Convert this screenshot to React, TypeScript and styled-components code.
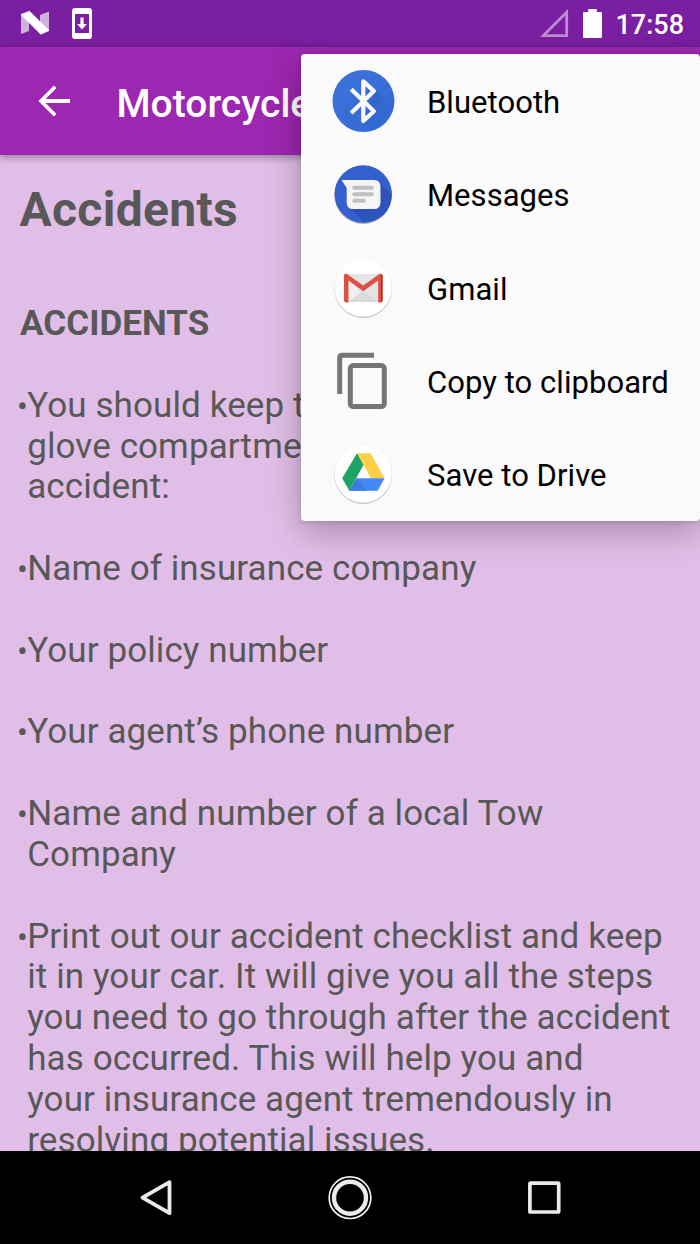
import React from "react";
import styled, { createGlobalStyle } from "styled-components";

const GlobalStyle = createGlobalStyle`
  html, body { margin: 0; padding: 0; }
  body { font-family: Roboto, "Liberation Sans", sans-serif; }
  * { box-sizing: border-box; }
`;

const Screen = styled.div`
  position: relative;
  display: flex;
  flex-direction: column;
  width: 700px;
  height: 1244px;
  overflow: hidden;
  background: #e1bee7;
`;

const StatusBar = styled.header`
  display: flex;
  flex: none;
  align-items: center;
  justify-content: space-between;
  height: 46.67px;
  padding: 0 16px 0 20px;
  background: #7b1fa2;
  color: #fff;
`;

const StatusGroup = styled.div<{ $gap: number }>`
  display: flex;
  align-items: center;
  gap: ${(p) => p.$gap}px;
  svg { display: block; }
`;

const Clock = styled.span`
  padding-top: 3px;
  font-size: 27px;
  line-height: 32px;
  font-weight: 500;
`;

const AppBar = styled.div`
  z-index: 1;
  display: flex;
  flex: none;
  align-items: center;
  gap: 46.5px;
  height: 108.5px;
  padding: 0 0 0 38px;
  background: #9c27b0;
  box-shadow: 0 2px 8px rgba(0, 0, 0, 0.38);
  svg { display: block; }
`;

const AppTitle = styled.h1`
  margin: 0;
  padding-top: 6px;
  color: #fff;
  font-size: 39px;
  line-height: 46px;
  font-weight: 500;
`;

const Article = styled.main`
  flex: 1;
  min-height: 0;
  overflow: hidden;
  padding: 27px 20px 0;
  color: #585858;
`;

const Heading = styled.h2`
  margin: 0 0 65px -0.5px;
  font-size: 48px;
  line-height: 56px;
  font-weight: 700;
  letter-spacing: 0.3px;
`;

const Subheading = styled.h3`
  margin: 0 0 41.6px;
  font-size: 35px;
  line-height: 41px;
  font-weight: 700;
  letter-spacing: 0.05px;
`;

const Notes = styled.ul`
  display: flex;
  flex-direction: column;
  gap: 40.83px;
  margin: 0;
  padding: 0;
  list-style: none;
`;

const Note = styled.li`
  display: flex;
  margin-left: -3px;
  font-size: 35px;
  line-height: 40.83px;
  letter-spacing: 0.1px;
  white-space: nowrap;
`;

const Bullet = styled.span`
  flex: none;
  width: 10.2px;
  font-size: 32px;
`;

const Menu = styled.div`
  position: absolute;
  z-index: 2;
  top: 54px;
  left: 301px;
  display: flex;
  flex-direction: column;
  width: 399px;
  height: 467px;
  border-radius: 4px;
  background: #fafafa;
  box-shadow: 0 10px 34px rgba(0, 0, 0, 0.28), 0 1px 4px rgba(0, 0, 0, 0.14);
`;

const MenuItem = styled.div`
  display: flex;
  flex: 1;
  align-items: center;
  gap: 32px;
  padding: 1px 0 0 31px;
  color: #000;
  font-size: 31px;
  line-height: 36px;
  letter-spacing: 0.05px;
  svg { display: block; flex: none; }
`;

const Label = styled.span`
  padding-top: 3px;
`;

const NavBar = styled.nav`
  display: flex;
  flex: none;
  align-items: center;
  justify-content: space-between;
  height: 93px;
  padding: 0 134px 0 133.5px;
  background: #000;
  svg { display: block; }
`;

const NougatIcon = () => (
  <svg width="30" height="26" viewBox="0 0 30 26">
    <path d="M1 4 9 8V21L1 24ZM20 5 29 1.5V21L20 17Z" fill="#fff" opacity=".65" />
    <path d="M1 4.5 9.5 1.3 29 20.5 20.8 24.2Z" fill="#fff" stroke="#fff" strokeWidth=".8" strokeLinejoin="round" />
  </svg>
);

const UpdateIcon = () => (
  <svg width="20" height="31" viewBox="0 0 20 31">
    <path fillRule="evenodd" d="M3 0H17Q20 0 20 3V28Q20 31 17 31H3Q0 31 0 28V3Q0 0 3 0ZM3 6V25H17V6Z" fill="#fff" />
    <path d="M8.4 9.5H11.6V16H15L10 21.5 5 16H8.4Z" fill="#fff" />
  </svg>
);

const SignalIcon = () => (
  <svg width="30" height="29" viewBox="0 0 30 29">
    <path d="M3.2 26.7H26.7V3.2Z" fill="none" stroke="#fff" strokeWidth="2.7" opacity=".5" />
  </svg>
);

const BatteryIcon = () => (
  <svg width="19" height="29" viewBox="0 0 19 29">
    <path d="M5.2 0H13.8V3H18Q19 3 19 4V28Q19 29 18 29H1Q0 29 0 28V4Q0 3 1 3H5.2Z" fill="#fff" />
  </svg>
);

const BackArrow = () => (
  <svg width="32" height="32" viewBox="0 0 32 32">
    <path d="M32 14.1V17.9H7.5L18.5 28.9 15.9 31.6 .4 16 15.9 .4 18.5 3.1 7.5 14.1Z" fill="#fff" />
  </svg>
);

const BluetoothIcon = () => (
  <svg width="63" height="63" viewBox="0 0 63 63">
    <defs>
      <linearGradient id="bt" x1="0" y1="0" x2="1" y2="1">
        <stop offset="0" stopColor="#3e74dc" />
        <stop offset="1" stopColor="#3267d3" />
      </linearGradient>
      <linearGradient id="btShade" x1="0" y1="0" x2="1" y2="1">
        <stop offset="0" stopColor="#2857ba" />
        <stop offset="1" stopColor="#3267d3" stopOpacity="0" />
      </linearGradient>
    </defs>
    <circle cx="31.5" cy="31" r="31" fill="url(#bt)" />
    <path d="M43.5 21 58.5 36Q54.5 52 38.5 60L29.5 52Z" fill="url(#btShade)" opacity=".75" />
    <path d="M19.2 19.3 41.9 41.2 31.3 51V11.3L41.9 21.1 19.2 43" fill="none" stroke="#fafafa" strokeWidth="4.2" strokeLinejoin="round" />
  </svg>
);

const MessagesIcon = () => (
  <svg width="63" height="63" viewBox="0 0 63 63">
    <defs>
      <linearGradient id="msgShade" x1=".3" y1=".2" x2=".8" y2="1">
        <stop offset="0" stopColor="#2b4fb2" />
        <stop offset="1" stopColor="#2f57c3" />
      </linearGradient>
    </defs>
    <circle cx="31.2" cy="32.2" r="28.7" fill="#aaa" />
    <circle cx="31.2" cy="31" r="28.7" fill="#345fcf" />
    <path d="M46 19 59.5 31Q59.5 50 43 57.3L33 59.5 17 44Z" fill="url(#msgShade)" />
    <path d="M9.5 17H42Q48.5 17 48.5 24V39.2Q48.5 46 42 46H21Q14.7 46 14.7 39.2V25Z" fill="#f5f5f5" />
    <path d="M22.3 24.7H39.8M22.3 31.2H39.8M22.3 37.7H31.8" stroke="#bfbfbf" strokeWidth="4" strokeLinecap="round" />
  </svg>
);

const GmailIcon = () => (
  <svg width="63" height="63" viewBox="0 0 63 63">
    <circle cx="31.2" cy="31.7" r="29.2" fill="#e9e9e9" />
    <circle cx="31.2" cy="32.2" r="28.7" fill="#cacaca" />
    <circle cx="31.2" cy="31" r="28.6" fill="#fff" />
    <path d="M14 17H49V45H14Z" fill="#e5e5e5" />
    <path d="M16 45 31.2 34 48 45Z" fill="#dadada" />
    <path d="M16 18V45L28 36Z" fill="#eee" />
    <path d="M12 18.5Q12 16.5 14.2 16.5L31.2 28.5 48.2 16.5Q50.5 16.5 50.5 18.5V43.5Q50.5 45.5 48.5 45.5H46.2V23.5L31.2 34.2 16.5 23.5V45.5H14Q12 45.5 12 43.5Z" fill="#de5145" />
    <path d="M49.2 17 50.5 18.5V43.5Q50.5 45.5 48.5 45.5H49.2Z" fill="#b31b14" />
  </svg>
);

const CopyIcon = () => (
  <svg width="63" height="63" viewBox="0 0 63 63">
    <path d="M42 5.2H10.5Q7.7 5.2 7.7 8V44" fill="none" stroke="#757575" strokeWidth="5" />
    <rect x="18.3" y="15.6" width="34" height="41" rx="3" fill="none" stroke="#757575" strokeWidth="5" />
  </svg>
);

const DriveIcon = () => (
  <svg width="63" height="63" viewBox="0 0 63 63">
    <circle cx="31.2" cy="31.7" r="29.2" fill="#e9e9e9" />
    <circle cx="31.2" cy="32.2" r="28.7" fill="#cacaca" />
    <circle cx="31.2" cy="31" r="28.6" fill="#fff" />
    <path d="M25 10.2H38.6L52.6 35.2H39Z" fill="#ffcf48" />
    <path d="M25 10.2 31.5 21.9 17.3 47.8 10.2 35.2Z" fill="#1da462" />
    <path d="M24.5 35.2H52.6L45.7 47.8H17.3Z" fill="#4688f4" />
    <path d="M24.5 35.2 35 47.8H17.3Z" fill="#3c7ce2" />
  </svg>
);

const NavBack = () => (
  <svg width="44" height="44" viewBox="0 0 44 44">
    <path d="M8.5 21.7 35.5 6.2V37.2Z" fill="none" stroke="#ebebeb" strokeWidth="3.8" strokeLinejoin="round" />
  </svg>
);

const NavHome = () => (
  <svg width="44" height="44" viewBox="0 0 44 44">
    <circle cx="22" cy="21.7" r="20.8" fill="none" stroke="#f4f4f4" strokeWidth="1.7" />
    <circle cx="22" cy="21.7" r="16" fill="none" stroke="#ebebeb" strokeWidth="4.4" />
  </svg>
);

const NavRecent = () => (
  <svg width="44" height="44" viewBox="0 0 44 44">
    <rect x="7.9" y="7.2" width="28.8" height="28.8" rx=".8" fill="none" stroke="#ebebeb" strokeWidth="3.7" />
  </svg>
);

const shareTargets = [
  { label: "Bluetooth", Icon: BluetoothIcon },
  { label: "Messages", Icon: MessagesIcon },
  { label: "Gmail", Icon: GmailIcon },
  { label: "Copy to clipboard", Icon: CopyIcon },
  { label: "Save to Drive", Icon: DriveIcon },
];

const notes = [
  ["You should keep this", "glove compartment", "accident:"],
  ["Name of insurance company"],
  ["Your policy number"],
  ["Your agent’s phone number"],
  ["Name and number of a local Tow", "Company"],
  [
    "Print out our accident checklist and keep",
    "it in your car. It will give you all the steps",
    "you need to go through after the accident",
    "has occurred. This will help you and",
    "your insurance agent tremendously in",
    "resolving potential issues.",
  ],
];

export default function App() {
  return (
    <Screen>
      <GlobalStyle />
      <StatusBar>
        <StatusGroup $gap={22}>
          <NougatIcon />
          <UpdateIcon />
        </StatusGroup>
        <StatusGroup $gap={13}>
          <SignalIcon />
          <BatteryIcon />
          <Clock>17:58</Clock>
        </StatusGroup>
      </StatusBar>
      <AppBar>
        <BackArrow />
        <AppTitle>Motorcycle</AppTitle>
      </AppBar>
      <Article>
        <Heading>Accidents</Heading>
        <Subheading>ACCIDENTS</Subheading>
        <Notes>
          {notes.map((lines) => (
            <Note key={lines[0]}>
              <Bullet>•</Bullet>
              <div>
                {lines.map((line) => (
                  <div key={line}>{line}</div>
                ))}
              </div>
            </Note>
          ))}
        </Notes>
      </Article>
      <NavBar>
        <NavBack />
        <NavHome />
        <NavRecent />
      </NavBar>
      <Menu>
        {shareTargets.map(({ label, Icon }) => (
          <MenuItem key={label}>
            <Icon />
            <Label>{label}</Label>
          </MenuItem>
        ))}
      </Menu>
    </Screen>
  );
}
